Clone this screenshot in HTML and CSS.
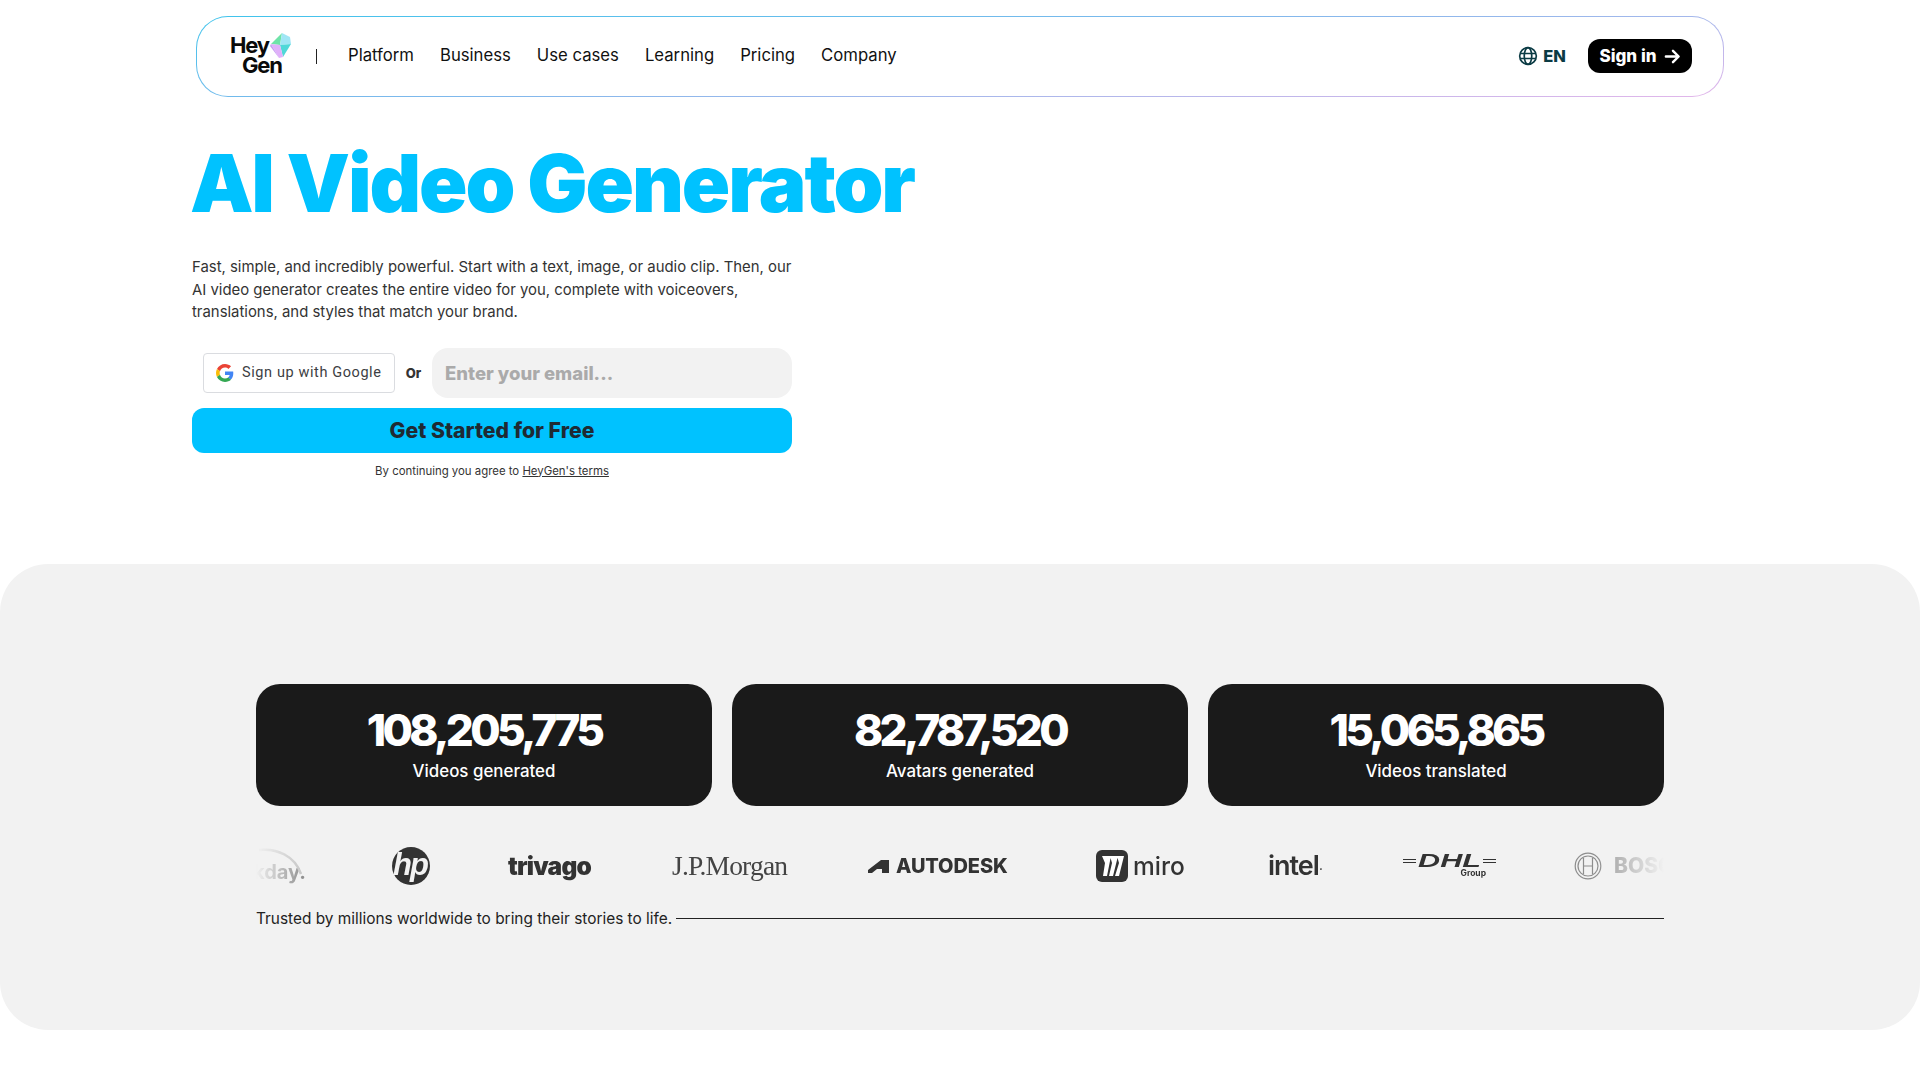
FILE: index.html
```html
<!DOCTYPE html>
<html lang="en">
<head>
<meta charset="utf-8">
<title>AI Video Generator</title>
<link rel="stylesheet" href="styles.css">
</head>
<body>
<header class="nav">
  <a class="brand">
    <span class="brand-text"><span>Hey</span><span class="gen">Gen</span></span>
    <svg class="gem" viewBox="0 0 21 25" width="21" height="25"><polygon points="12,0 1,11 10,12" fill="#6fe3a8"/><polygon points="12,0 20,4 21,11 10,12" fill="#a0e6f5"/><polygon points="21,11 13,24 10,12" fill="#4fd8d8"/><polygon points="1,11 10,12 13,24 9,25" fill="#e0b0fa"/><polygon points="1,11 0,13 9,25" fill="#c89cf2"/></svg>
  </a>
  <span class="sep"></span>
  <nav class="links">
    <a>Platform</a><a>Business</a><a>Use cases</a><a>Learning</a><a>Pricing</a><a>Company</a>
  </nav>
  <div class="nav-right">
    <span class="lang">
      <svg viewBox="0 0 24 24" width="20" height="20" fill="none" stroke="#0b3b44" stroke-width="2"><circle cx="12" cy="12" r="10"/><ellipse cx="12" cy="12" rx="4.5" ry="10"/><path d="M2.5 9h19M2.5 15h19"/></svg>
      EN
    </span>
    <a class="signin">Sign in
      <svg viewBox="0 0 18 18" width="17" height="17" fill="none" stroke="#fff" stroke-width="2.6" stroke-linecap="round" stroke-linejoin="round"><path d="M2 9h13M9.5 3l6 6-6 6"/></svg>
    </a>
  </div>
</header>

<main>
  <section class="hero">
    <h1>AI Video Generator</h1>
    <p class="lead">Fast, simple, and incredibly powerful. Start with a text, image, or audio clip. Then, our AI video generator creates the entire video for you, complete with voiceovers, translations, and styles that match your brand.</p>
    <div class="form">
      <div class="form-row">
        <a class="google">
          <svg viewBox="0 0 48 48" width="18" height="18"><path fill="#EA4335" d="M24 9.5c3.5 0 6.7 1.2 9.2 3.6l6.9-6.9C35.9 2.4 30.5 0 24 0 14.6 0 6.5 5.4 2.6 13.2l8 6.2C12.4 13.7 17.7 9.5 24 9.5z"/><path fill="#4285F4" d="M46.1 24.5c0-1.6-.1-3.1-.4-4.5H24v9h12.4c-.5 2.9-2.200 5.4-4.7 7l7.600 5.900c4.400-4.100 6.800-10.100 6.800-17.400z"/><path fill="#FBBC05" d="M10.500 28.600c-.5-1.400-.8-3-.8-4.600s.3-3.200.8-4.600l-8-6.200C.9 16.500 0 20.100 0 24s.9 7.500 2.600 10.800l7.900-6.200z"/><path fill="#34A853" d="M24 48c6.500 0 11.900-2.100 15.900-5.800l-7.600-5.900c-2.100 1.400-4.900 2.300-8.300 2.300-6.300 0-11.600-4.200-13.500-9.900l-8 6.200C6.500 42.600 14.600 48 24 48z"/></svg>
          Sign up with Google
        </a>
        <span class="or">Or</span>
        <div class="email">Enter your email...</div>
      </div>
      <a class="cta">Get Started for Free</a>
      <p class="terms">By continuing you agree to <u>HeyGen's terms</u></p>
    </div>
  </section>

  <section class="proof">
    <div class="stats">
      <div class="stat"><strong>108,205,775</strong><span>Videos generated</span></div>
      <div class="stat"><strong>82,787,520</strong><span>Avatars generated</span></div>
      <div class="stat"><strong>15,065,865</strong><span>Videos translated</span></div>
    </div>
    <div class="marquee">
      <div class="track">
        <span class="logo workday">
          <svg viewBox="0 0 60 30" width="60" height="30" fill="none" stroke="#c4c4c4" stroke-width="2.500"><path d="M2 2C20 0 38 8 44 26"/></svg>
          <span>workday.</span>
        </span>
        <svg class="logo hp" viewBox="0 0 38 38" width="38" height="38"><circle cx="19" cy="19" r="19" fill="#333"/><text x="18" y="28" text-anchor="middle" class="hp-text">hp</text></svg>
        <span class="logo trivago">trivago</span>
        <span class="logo jpm">J.P.Morgan</span>
        <span class="logo autodesk">
          <svg viewBox="0 0 22 14" width="22" height="14"><path fill="#333" d="M0 14V11L13 1h8v13h-7v-4H9l-5 4z"/></svg>
          AUTODESK
        </span>
        <span class="logo miro">
          <svg viewBox="0 0 32 32" width="32" height="32"><rect width="32" height="32" rx="6" fill="#333"/><path fill="#fff" d="M11 6h4l-4 20H7l2-13-3-7zM18 6h4l-5 20h-4l3-13-2-7zM24 6h4l-5 20h-4l4-13-2-7z"/></svg>
          miro
        </span>
        <span class="logo intel">intel<small>.</small></span>
        <span class="logo dhl">
          <span class="dhl-mark"><i></i><b><em>DHL</em></b><i></i></span>
          <small>Group</small>
        </span>
        <span class="logo bosch">
          <svg viewBox="0 0 28 28" width="28" height="28" fill="none" stroke="#8d8d8d" stroke-width="1.200"><circle cx="14" cy="14" r="12.800"/><circle cx="14" cy="14" r="10"/><path d="M9.500 6v16M18.500 6v16M9.500 14h9"/></svg>
          BOSCH
        </span>
      </div>
    </div>
    <div class="trusted"><span>Trusted by millions worldwide to bring their stories to life.</span><i></i></div>
  </section>
</main>
</body>
</html>
```
FILE: styles.css
```css
* { box-sizing: border-box; }
html, body { margin: 0; padding: 0; }
body { background: #fff; color: #1a1a1a; font-family: "Inter", "Liberation Sans", sans-serif; height: 1080px; overflow: hidden; }
a { color: inherit; text-decoration: none; }

.nav {
  width: 1528px; height: 81px; margin: 16px auto 0; padding: 0 31px 0 33px;
  display: flex; align-items: center;
  border: 1px solid transparent; border-radius: 32px;
  background: linear-gradient(#fff, #fff) padding-box,
              linear-gradient(174deg, #3fc4ec 0%, #7fb8ec 45%, #e3b6ea 100%) border-box;
}
.brand { display: flex; align-items: flex-start; width: 63px; height: 40px; margin-top: -4px; }
.brand-text { display: flex; flex-direction: column; align-items: flex-start; flex: none; width: 40px; font-weight: 700; font-size: 22px; line-height: 20px; letter-spacing: -1.2px; color: #0a0a0a; }
.gen { margin-left: 12px; }
.gem { flex: none; margin: -2px 0 0 0; }
.sep { width: 1px; height: 15px; background: #222; margin: 0 0 0 23px; }
.links { display: flex; gap: 26px; margin-left: 31px; margin-top: -4px; font-size: 16.700px; color: #111; }
.nav-right { margin-left: auto; display: flex; align-items: center; gap: 22px; margin-top: -1px; }
.lang { display: flex; align-items: center; gap: 5px; font-weight: 800; font-size: 16.500px; color: #0b3b44; }
.signin { display: flex; align-items: center; gap: 7px; height: 34px; width: 104px; justify-content: center; background: #000; color: #fff; border-radius: 12px; font-weight: 800; font-size: 17px; }

.hero { width: 1536px; margin: 0 auto; padding-top: 36px; }
h1 { margin: 0 0 0 -2px; font-size: 80px; line-height: 100px; font-weight: 900; color: #00c2ff; letter-spacing: -2.100px; white-space: nowrap; }
.lead { width: 604px; margin: 23px 0 0; font-size: 14.900px; line-height: 22.500px; color: #333; }
.form { width: 600px; margin-top: 24px; }
.form-row { display: flex; align-items: center; padding-left: 11px; height: 50px; }
.google { display: flex; align-items: center; gap: 8px; width: 192px; height: 40px; padding-left: 12px; border: 1px solid #dadce0; border-radius: 4px; background: #fff; font-family: "Roboto", sans-serif; font-size: 14.500px; letter-spacing: .6px; color: #3c4043; white-space: nowrap; }
.or { width: 37px; text-align: center; font-weight: 800; font-size: 13px; color: #333; }
.email { flex: 1; height: 50px; display: flex; align-items: center; padding-left: 13px; background: #f2f2f2; border-radius: 16px; font-weight: 800; font-size: 18.500px; color: #aaa; }
.cta { display: flex; align-items: center; justify-content: center; height: 45px; margin-top: 10px; background: #00c2ff; border-radius: 12px; font-weight: 800; font-size: 21.200px; color: #1f2a33; }
.terms { margin: 10px 0 0; text-align: center; font-size: 11.400px; line-height: 16px; color: #333; }

.proof { margin-top: 85px; height: 466px; padding: 120px 256px 0; background: #f2f2f2; border-radius: 48px; }
.stats { display: grid; grid-template-columns: repeat(3, 1fr); gap: 20px; }
.stat { height: 122px; display: flex; flex-direction: column; align-items: center; padding-top: 21px; background: #1a1a1a; border-radius: 24px; color: #fff; }
.stat strong { font-size: 44px; line-height: 50px; font-weight: 800; letter-spacing: -3.700px; }
.stat span { margin-top: 4px; font-size: 16.900px; line-height: 24px; font-weight: 500; }

.marquee { margin-top: 38px; height: 44px; overflow: hidden; -webkit-mask-image: linear-gradient(90deg, transparent 0, #000 50px, #000 1340px, transparent 100%); mask-image: linear-gradient(90deg, transparent 0, #000 50px, #000 1340px, transparent 100%); }
.track { display: flex; align-items: center; gap: 78px; height: 44px; margin-left: -43px; white-space: nowrap; color: #333; }
.logo { flex: none; display: flex; align-items: center; }
.workday { position: relative; width: 101px; height: 36px; font-weight: 700; font-size: 20px; color: #8a8a8a; align-items: flex-end; justify-content: flex-end; padding-right: 8px; }
.workday svg { position: absolute; left: 44px; top: 0; }
.hp-text { font: italic 700 31px "Liberation Sans", sans-serif; fill: #f2f2f2; letter-spacing: -2px; }
.trivago { width: 86px; font-weight: 900; font-size: 24.500px; letter-spacing: -.8px; }
.jpm { width: 118px; font-family: "Liberation Serif", serif; font-size: 27.500px; letter-spacing: -.8px; color: #444; }
.autodesk { width: 150px; gap: 6px; font-weight: 800; font-size: 20px; letter-spacing: -.1px; }
.miro { width: 94px; gap: 5px; font-size: 24.500px; font-weight: 500; }
.intel { width: 56px; font-size: 27px; font-weight: 600; letter-spacing: -1px; }
.intel small { font-size: 12px; }
.dhl { width: 94px; flex-direction: column; align-items: center; }
.dhl-mark { display: flex; align-items: center; gap: 1px; font: italic 900 18px/15px "Liberation Sans", sans-serif; }
.dhl-mark i { width: 13px; height: 4px; border-top: 1px solid #333; border-bottom: 1px solid #333; }
.dhl-mark b { width: 65px; text-align: center; }
.dhl-mark em { display: inline-block; transform: scaleX(1.7); }
.dhl small { align-self: flex-end; margin-right: 10px; font-size: 8.500px; line-height: 9px; font-weight: 700; }
.bosch { gap: 12px; font-weight: 800; font-size: 21px; color: #999; }

.trusted { display: flex; align-items: center; gap: 4px; margin-top: 20px; font-size: 15.400px; line-height: 22px; color: #222; }
.trusted i { flex: 1; height: 1px; background: #222; }
```
